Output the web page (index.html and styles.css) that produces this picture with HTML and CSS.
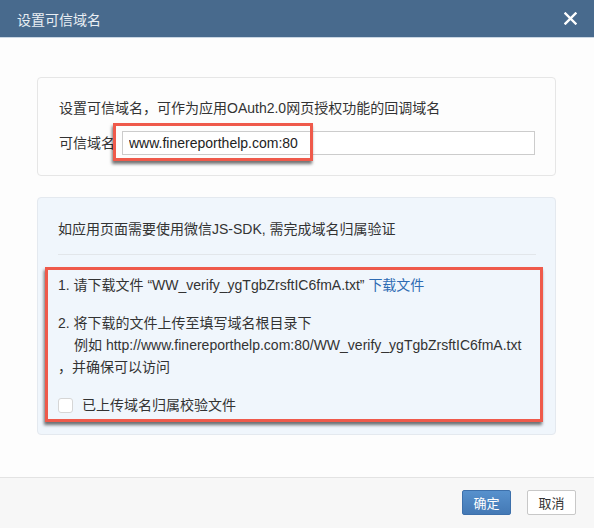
FILE: index.html
```html
<!DOCTYPE html>
<html lang="zh-CN">
<head>
<meta charset="utf-8">
<title>设置可信域名</title>
<link rel="stylesheet" href="styles.css">
</head>
<body>
<div class="dialog">
  <header class="dlg-head">
    <span class="dlg-title">设置可信域名</span>
    <button class="dlg-close" type="button" aria-label="关闭">
      <svg width="13" height="13" viewBox="0 0 13 13"><path d="M1.5 1.5 L11.5 11.5 M11.5 1.5 L1.5 11.5" stroke="#ffffff" stroke-width="2.4" stroke-linecap="square" fill="none"/></svg>
    </button>
  </header>
  <main class="dlg-body">
    <section class="panel">
      <p class="desc">设置可信域名，可作为应用OAuth2.0网页授权功能的回调域名</p>
      <div class="field">
        <label class="field-label" for="domain">可信域名</label>
        <div class="input-wrap">
          <input id="domain" class="input" type="text" value="www.finereporthelp.com:80">
          <span class="mark"></span>
        </div>
      </div>
    </section>
    <section class="panel panel-blue">
      <p class="desc">如应用页面需要使用微信JS-SDK, 需完成域名归属验证</p>
      <div class="sep"></div>
      <div class="steps">
        <p class="step">1. 请下载文件 “WW_verify_ygTgbZrsftIC6fmA.txt” <a class="link" href="#">下载文件</a></p>
        <p class="step step-2">2. 将下载的文件上传至填写域名根目录下<br><span class="indent">例如 http://www.finereporthelp.com:80/WW_verify_ygTgbZrsftIC6fmA.txt</span><br>，并确保可以访问</p>
        <label class="check"><span class="check-box"></span><span>已上传域名归属校验文件</span></label>
      </div>
    </section>
  </main>
  <footer class="dlg-foot">
    <button class="btn btn-primary" type="button">确定</button>
    <button class="btn" type="button">取消</button>
  </footer>
</div>
</body>
</html>
```
FILE: styles.css
```css
* { box-sizing: border-box; }
html, body { margin: 0; padding: 0; }
body {
  font-family: "Liberation Sans", "Noto Sans CJK SC", sans-serif;
  font-size: 14px;
  color: #333333;
  background: #fdfdfd;
}
.dialog {
  height: 528px;
  display: flex;
  flex-direction: column;
  background: #fdfdfd;
}
.dlg-head {
  height: 38px;
  flex: none;
  background: #486a8d;
  border-bottom: 1px solid #c9d6e3;
  display: flex;
  align-items: center;
  justify-content: space-between;
  padding: 0 17px 0 17px;
}
.dlg-title {
  color: #e9eef3;
  font-size: 14px;
}
.dlg-close {
  border: 0;
  background: transparent;
  padding: 0;
  width: 13px;
  height: 13px;
  display: flex;
  cursor: pointer;
}
.dlg-body {
  flex: 1;
  padding: 39px 38px 0 37px;
  display: flex;
  flex-direction: column;
  gap: 21px;
}
.panel {
  border: 1px solid #e6e6e6;
  border-radius: 4px;
  background: #fdfdfd;
  padding: 20px 20px 20px 21px;
}
.panel-blue {
  background: #f0f6fc;
  border-color: #e4e9ef;
  padding: 21px 19px 12px 20px;
}
.desc {
  margin: 0;
  line-height: 20px;
}
.field {
  margin-top: 13px;
  display: flex;
  align-items: center;
  gap: 7px;
}
.field-label { line-height: 24px; }
.input-wrap {
  position: relative;
  flex: 1;
  display: flex;
}
.input {
  flex: 1;
  height: 24px;
  border: 1px solid #cccccc;
  background: #ffffff;
  font: inherit;
  font-size: 14px;
  color: #222222;
  padding: 0 6px;
  margin: 0;
  outline: none;
}
.mark {
  position: absolute;
  left: -9px;
  top: -8px;
  width: 200px;
  height: 38px;
  border: 3px solid #ef5a4b;
  box-shadow: -1px 3px 3px rgba(0, 0, 0, 0.55);
  pointer-events: none;
}
.sep {
  height: 1px;
  background: #e2e6ea;
  margin-top: 15px;
}
.steps {
  margin: 12px -7px 0 -13px;
  border: 3px solid #ef5a4b;
  box-shadow: -1px 3px 3px rgba(0, 0, 0, 0.55);
  padding: 4px 4px 3px 10px;
  line-height: 22px;
}
.step { margin: 0; }
.step-2 { margin-top: 16px; }
.indent { padding-left: 16px; }
.link {
  color: #2e6bb3;
  text-decoration: none;
}
.check {
  margin-top: 16px;
  display: flex;
  align-items: center;
  gap: 9px;
  height: 22px;
}
.check-box {
  width: 15px;
  height: 15px;
  border: 1px solid #d6d6d6;
  border-radius: 3px;
  background: #ffffff;
  flex: none;
}
.dlg-foot {
  flex: none;
  height: 51px;
  border-top: 1px solid #e3e3e3;
  background: #f7f7f7;
  display: flex;
  justify-content: flex-end;
  align-items: flex-start;
  gap: 16px;
  padding: 12px 18px 0 0;
}
.btn {
  width: 49px;
  height: 25px;
  border: 1px solid #c8c8c8;
  border-radius: 2px;
  background: #ffffff;
  font: inherit;
  font-size: 13px;
  color: #333333;
  padding: 0;
  cursor: pointer;
}
.btn-primary {
  background: linear-gradient(#5791cd, #4479b5);
  border-color: #3d70ab;
  color: #ffffff;
}
```
